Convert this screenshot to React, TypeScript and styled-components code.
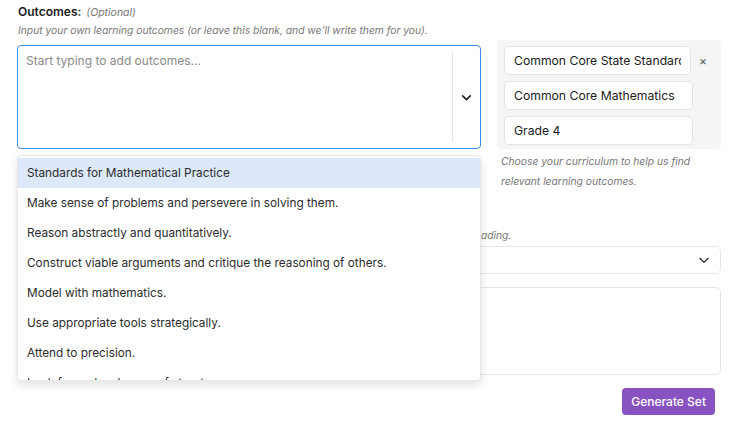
import React from 'react';
import styled, { createGlobalStyle } from 'styled-components';

const GlobalStyle = createGlobalStyle`
  body {
    margin: 0;
    background: #fff;
    font-family: Inter, "Noto Sans", sans-serif;
    color: #1f1f1f;
  }
`;

const Page = styled.div`
  width: 704px;
  padding: 4px 17px 0;
`;

const TopRow = styled.div`
  display: grid;
  grid-template-columns: 464px 223px;
  column-gap: 17px;
  align-items: start;
`;

const Column = styled.div`
  display: flex;
  flex-direction: column;
`;

const RightColumn = styled(Column)`
  padding-top: 36px;
  margin-left: -1px;
`;

const Label = styled.div`
  font-size: 12px;
  line-height: 16px;
  font-weight: 600;
  color: #1a1a1a;
  padding-left: 1px;
`;

const Optional = styled.span`
  font-size: 10.5px;
  font-weight: 400;
  font-style: italic;
  color: #777;
  margin-left: 2px;
`;

const Hint = styled.div`
  margin-top: 1px;
  font-size: 10.3px;
  line-height: 16px;
  font-style: italic;
  color: #777;
  padding-left: 1px;
`;

const ComboWrap = styled.div`
  position: relative;
  margin-top: 7px;
`;

const Combo = styled.div`
  box-sizing: border-box;
  height: 104px;
  border: 1px solid #3c8cf0;
  border-radius: 4px;
  display: flex;
`;

const Placeholder = styled.div`
  flex: 1;
  padding: 7px 8px;
  font-size: 12px;
  line-height: 16px;
  color: #8a8a8a;
`;

const Indicator = styled.div`
  width: 27px;
  display: flex;
  align-items: center;
  justify-content: center;
  margin: 6px 0;
  border-left: 1px solid #e3e3e3;
  color: #222;
`;

const Menu = styled.div`
  position: absolute;
  top: calc(100% + 6px);
  left: 0;
  right: 0;
  height: 226px;
  box-sizing: border-box;
  padding-top: 2px;
  overflow: hidden;
  background: #fff;
  border: 1px solid #e8e8e8;
  border-radius: 4px;
  box-shadow: 0 4px 10px rgba(0, 0, 0, 0.12);
  z-index: 10;
`;

const MenuItem = styled.div<{ $active?: boolean }>`
  height: 30px;
  display: flex;
  align-items: center;
  padding-left: 9px;
  font-size: 11.8px;
  color: #2b2b2b;
  background: ${(p) => (p.$active ? '#dde9fb' : 'transparent')};
`;

const Panel = styled.div`
  background: #f5f5f6;
  border-radius: 4px;
  padding: 6px 7px 4px;
  display: flex;
  flex-direction: column;
  gap: 6px;
`;

const PanelRow = styled.div`
  display: flex;
  align-items: center;
`;

const Field = styled.div<{ $w: number }>`
  box-sizing: border-box;
  width: ${(p) => p.$w}px;
  height: 29px;
  padding: 0 9px;
  display: flex;
  align-items: center;
  background: #fff;
  border: 1px solid #e4e4e6;
  border-radius: 5px;
`;

const FieldText = styled.span`
  flex: 1;
  overflow: hidden;
  white-space: nowrap;
  font-size: 12.2px;
  color: #1a1a1a;
`;

const Clear = styled.span`
  margin-left: 8px;
  font-size: 12px;
  color: #555;
`;

const SideHint = styled(Hint)`
  margin-top: 2px;
  padding-left: 4px;
  line-height: 20px;
`;

const Section = styled.div`
  margin-top: 18px;
  display: flex;
  flex-direction: column;
`;

const Select = styled.div`
  box-sizing: border-box;
  margin-top: 3px;
  height: 28px;
  border: 1px solid #e6e6e8;
  border-radius: 5px;
  display: flex;
  align-items: center;
  justify-content: flex-end;
  padding-right: 9px;
  color: #222;
`;

const TextArea = styled.div`
  box-sizing: border-box;
  margin-top: 13px;
  height: 88px;
  border: 1px solid #e6e6e8;
  border-radius: 5px;
`;

const Footer = styled.div`
  display: flex;
  justify-content: flex-end;
  margin-top: 13px;
  padding-right: 6px;
`;

const Button = styled.button`
  height: 27px;
  padding: 0 9px;
  border: none;
  border-radius: 4px;
  background: #8952c1;
  color: #fff;
  font-family: Inter, sans-serif;
  font-size: 12px;
  font-weight: 500;
`;

const Chevron = ({ size, stroke }: { size: number; stroke: number }) => (
  <svg width={size} height={size} viewBox="0 0 24 24" fill="none" stroke="currentColor" strokeWidth={stroke} strokeLinecap="round" strokeLinejoin="round">
    <path d="M5 9l7 7 7-7" />
  </svg>
);

const outcomes = [
  'Standards for Mathematical Practice',
  'Make sense of problems and persevere in solving them.',
  'Reason abstractly and quantitatively.',
  'Construct viable arguments and critique the reasoning of others.',
  'Model with mathematics.',
  'Use appropriate tools strategically.',
  'Attend to precision.',
  'Look for and make use of structure.',
];

const App: React.FC = () => (
  <>
    <GlobalStyle />
    <Page>
      <TopRow>
        <Column>
          <Label>
            Outcomes: <Optional>(Optional)</Optional>
          </Label>
          <Hint>Input your own learning outcomes (or leave this blank, and we'll write them for you).</Hint>
          <ComboWrap>
            <Combo>
              <Placeholder>Start typing to add outcomes...</Placeholder>
              <Indicator>
                <Chevron size={13} stroke={3} />
              </Indicator>
            </Combo>
            <Menu>
              {outcomes.map((o, i) => (
                <MenuItem key={o} $active={i === 0}>
                  {o}
                </MenuItem>
              ))}
            </Menu>
          </ComboWrap>
        </Column>
        <RightColumn>
          <Panel>
            <PanelRow>
              <Field $w={187}>
                <FieldText>Common Core State Standards</FieldText>
              </Field>
              <Clear>×</Clear>
            </PanelRow>
            <Field $w={189}>
              <FieldText>Common Core Mathematics</FieldText>
            </Field>
            <Field $w={189}>
              <FieldText>Grade 4</FieldText>
            </Field>
          </Panel>
          <SideHint>
            Choose your curriculum to help us find relevant learning outcomes.
          </SideHint>
        </RightColumn>
      </TopRow>
      <Section>
        <Label>
          Reading: <Optional>(Optional)</Optional>
        </Label>
        <Hint>Paste in a passage or choose a text, and we'll base the questions on it to support their close reading.</Hint>
        <Select>
          <Chevron size={14} stroke={2} />
        </Select>
        <TextArea />
      </Section>
      <Footer>
        <Button>Generate Set</Button>
      </Footer>
    </Page>
  </>
);

export default App;
